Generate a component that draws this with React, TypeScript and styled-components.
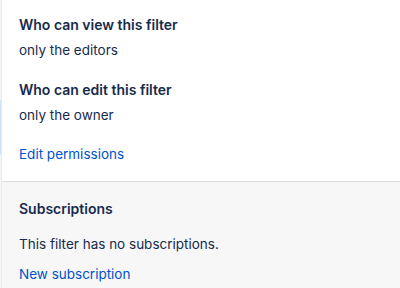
import React from "react";
import styled, { createGlobalStyle } from "styled-components";

const GlobalStyle = createGlobalStyle`
  html, body { margin: 0; padding: 0; background: #fff; }
  body { font-family: Inter, "Noto Sans", sans-serif; color: #172b4d; }
`;

const Frame = styled.div`
  display: flex;
  width: 400px;
  height: 288px;
  overflow: hidden;
`;

const Edge = styled.div`
  width: 1px;
  flex: none;
  background: linear-gradient(
    to bottom,
    #f4f5f7 0px,
    #f4f5f7 100px,
    #cfe0f8 100px,
    #cfe0f8 155px,
    #f4f5f7 155px
  );
  border-right: 1px solid #ebecf0;
`;

const Panel = styled.div`
  flex: 1;
  display: flex;
  flex-direction: column;
`;

const Section = styled.section<{ $muted?: boolean }>`
  background: ${(p) => (p.$muted ? "#f7f7f7" : "#fff")};
  border-top: ${(p) => (p.$muted ? "1px solid #dcdde0" : "none")};
  padding: ${(p) => (p.$muted ? "17px 17px 0" : "15px 17px 17px")};
  flex: ${(p) => (p.$muted ? 1 : "none")};
`;

const Heading = styled.h3`
  margin: 0;
  font-size: 14px;
  font-weight: 600;
  line-height: 20px;
  color: #172b4d;
`;

const Text = styled.p<{ $gap?: number }>`
  margin: ${(p) => p.$gap ?? 4}px 0 0;
  font-size: 13.5px;
  line-height: 20px;
  color: #172b4d;
`;

const Group = styled.div`
  & + & {
    margin-top: 20px;
  }
`;

const Link = styled.a<{ $gap?: number }>`
  display: block;
  margin-top: ${(p) => p.$gap ?? 21}px;
  font-size: 13.5px;
  line-height: 20px;
  color: #0052cc;
  text-decoration: none;
`;

export default function App() {
  return (
    <>
      <GlobalStyle />
      <Frame>
        <Edge />
        <Panel>
          <Section>
            <Group>
              <Heading>Who can view this filter</Heading>
              <Text $gap={5}>only the editors</Text>
            </Group>
            <Group>
              <Heading>Who can edit this filter</Heading>
              <Text $gap={5}>only the owner</Text>
            </Group>
            <Link href="#" $gap={19}>Edit permissions</Link>
          </Section>
          <Section $muted>
            <Heading>Subscriptions</Heading>
            <Text $gap={15}>This filter has no subscriptions.</Text>
            <Link href="#" $gap={10}>New subscription</Link>
          </Section>
        </Panel>
      </Frame>
    </>
  );
}
